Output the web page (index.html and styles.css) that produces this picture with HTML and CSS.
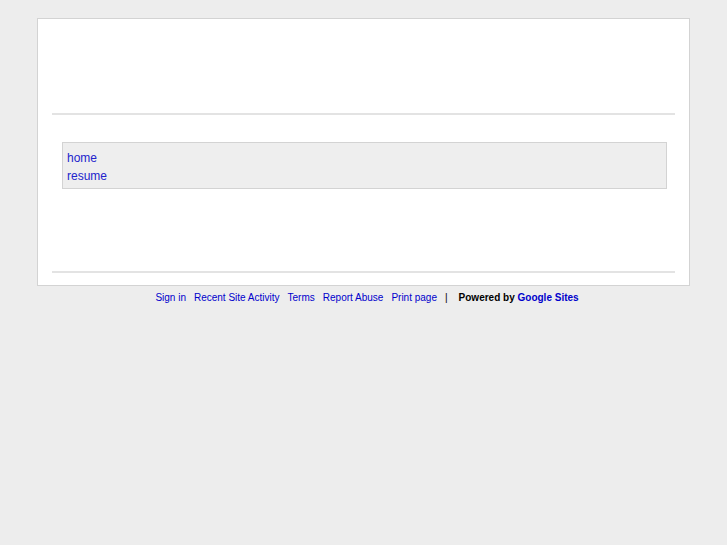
FILE: index.html
```html
<!DOCTYPE html>
<html lang="en">
<head>
  <meta charset="UTF-8" />
  <title>home</title>
  <link rel="stylesheet" href="styles.css">
</head>
<body>
  <div class="page">
    <div class="header"></div>
    <hr class="rule" />
    <div class="content">
      <div class="sidebar">
        <a href="#">home</a>
        <a href="#">resume</a>
      </div>
    </div>
    <hr class="rule" />
  </div>

  <div class="footer">
    <a href="#">Sign in</a>
    <a href="#">Recent Site Activity</a>
    <a href="#">Terms</a>
    <a href="#">Report Abuse</a>
    <a href="#">Print page</a>
    <span class="sep">|</span>
    <span class="powered">Powered by <a href="#">Google Sites</a></span>
  </div>
</body>
</html>
```

FILE: styles.css
```css
* {
  margin: 0;
  padding: 0;
  box-sizing: border-box;
}

body {
  font-family: "Liberation Sans", Arial, sans-serif;
  background-color: #ededed;
  padding-top: 18px;
}

a {
  color: #0000cc;
  text-decoration: none;
}

.page {
  width: 653px;
  margin: 0 auto;
  background-color: #fff;
  border: 1px solid #d3d3d3;
  padding: 0 14px 12px;
}

.header {
  height: 94px;
}

.rule {
  border: none;
  height: 2px;
  background-color: #e3e3e3;
}

.content {
  padding: 27px 8px 0 10px;
  height: 156px;
}

.sidebar {
  display: flex;
  flex-direction: column;
  background-color: #eeeeee;
  border: 1px solid #d3d3d3;
  padding: 6px 4px 3px;
  font-size: 12px;
  line-height: 18px;
}

.sidebar a {
  color: #2323cc;
}

.footer {
  display: flex;
  justify-content: center;
  align-items: center;
  gap: 8px;
  margin-top: 6px;
  font-size: 10px;
  line-height: 12px;
  padding-left: 7px;
}

.sep {
  color: #000;
  margin-right: 3px;
}

.powered {
  font-weight: bold;
  color: #000;
}
```
